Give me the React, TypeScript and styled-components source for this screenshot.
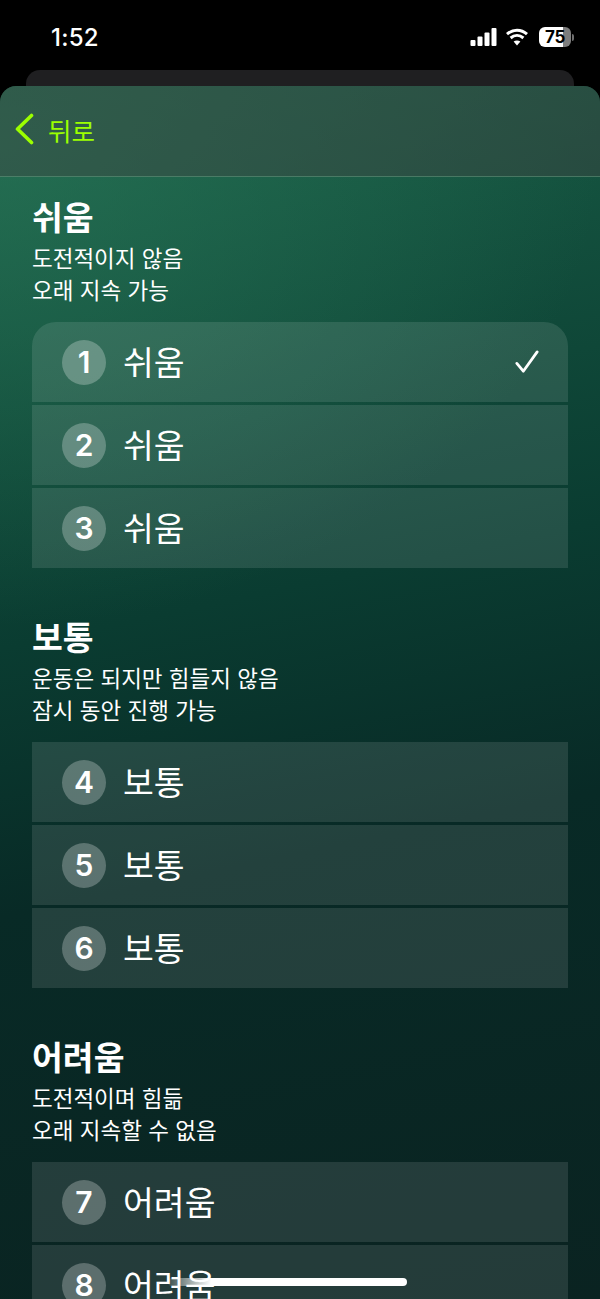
import React from 'react';
import styled, { createGlobalStyle } from 'styled-components';

const GlobalStyle = createGlobalStyle`
    html, body {
        margin: 0;
        padding: 0;
        background: #000000;
    }
    * {
        box-sizing: border-box;
    }
`;

const Screen = styled.div`
    position: relative;
    width: 600px;
    height: 1299px;
    overflow: hidden;
    background: #000000;
    color: #ffffff;
    font-family: "Inter", "Noto Sans CJK KR", sans-serif;
`;

const StatusBar = styled.div`
    display: flex;
    justify-content: space-between;
    align-items: center;
    height: 70px;
    padding: 4px 26px 0 51px;
`;

const Clock = styled.div`
    font-size: 24px;
    font-weight: 500;
    letter-spacing: 0.2px;
`;

const StatusIcons = styled.div`
    display: flex;
    align-items: center;
    gap: 9px;
`;

const Battery = styled.div`
    display: flex;
    align-items: center;
    justify-content: center;
    width: 32px;
    height: 20px;
    margin-left: 2px;
    border-radius: 6px;
    overflow: hidden;
    background: linear-gradient(90deg, #ffffff 0 24px, #7d7d7d 24px 100%);
    color: #000000;
    font-size: 17px;
    font-weight: 700;
    letter-spacing: -0.4px;
`;

const BatteryCap = styled.div`
    width: 2px;
    height: 7px;
    margin-left: -8px;
    border-radius: 0 2px 2px 0;
    background: #6f6f6f;
`;

const BackSheet = styled.div`
    height: 40px;
    margin: 0 26px -24px;
    border-radius: 14px 14px 0 0;
    background: #1f1f21;
`;

const Sheet = styled.div`
    position: relative;
    height: 1213px;
    border-radius: 16px 16px 0 0;
    overflow: hidden;
    background:
        radial-gradient(ellipse 600px 480px at 0px 60px, rgba(43, 122, 90, 0.6) 0%, rgba(43, 122, 90, 0) 100%),
        linear-gradient(168deg, #1a5f47 0%, #0a3c31 42%, #082a26 62%, #0a2321 100%);
`;

const Header = styled.div`
    display: flex;
    align-items: center;
    gap: 13px;
    height: 91px;
    padding: 0 0 4px 15px;
    background: rgba(66, 66, 66, 0.42);
    border-bottom: 1px solid rgba(110, 170, 140, 0.45);
`;

const BackLabel = styled.span`
    color: #9cff00;
    font-size: 25.5px;
    font-weight: 400;
`;

const Content = styled.div`
    display: flex;
    flex-direction: column;
    gap: 49px;
    padding: 20px 32px 0;
`;

const Section = styled.section`
    display: flex;
    flex-direction: column;
`;

const SectionTitle = styled.h2`
    margin: 0;
    height: 42px;
    font-size: 33.5px;
    line-height: 42px;
    font-weight: 700;
`;

const SectionDescription = styled.p`
    margin: 4px 0 15px;
    font-size: 22.5px;
    line-height: 32px;
    font-weight: 400;
    height: 64px;
`;

const Rows = styled.div<{ $rounded: boolean }>`
    display: flex;
    flex-direction: column;
    gap: 3px;
    border-radius: ${(props) => (props.$rounded ? '24px 24px 0 0' : '0')};
    overflow: hidden;
`;

const Row = styled.div`
    display: flex;
    align-items: center;
    height: 80px;
    padding: 0 28px 0 30px;
    background: rgba(255, 255, 255, 0.108);
`;

const Badge = styled.div`
    display: flex;
    align-items: center;
    justify-content: center;
    width: 44px;
    height: 45px;
    border-radius: 50%;
    background: rgba(255, 255, 255, 0.26);
    font-size: 30px;
    font-weight: 600;
`;

const RowLabel = styled.span`
    flex: 1;
    margin-left: 17px;
    font-size: 33.5px;
    line-height: 42px;
    margin-top: 2px;
    font-weight: 400;
`;

const HomeIndicator = styled.div`
    position: absolute;
    left: 168px;
    top: 1278px;
    width: 239px;
    height: 8px;
    border-radius: 4px;
    background: linear-gradient(90deg, rgba(255, 255, 255, 0.1) 0%, #ffffff 18%, #ffffff 100%);
`;

interface SectionData {
    title: string;
    lines: string[];
    rows: number[];
}

const sections: SectionData[] = [
    { title: '쉬움', lines: ['도전적이지 않음', '오래 지속 가능'], rows: [1, 2, 3] },
    { title: '보통', lines: ['운동은 되지만 힘들지 않음', '잠시 동안 진행 가능'], rows: [4, 5, 6] },
    { title: '어려움', lines: ['도전적이며 힘듦', '오래 지속할 수 없음'], rows: [7, 8, 9] },
];

export default function App() {
    return (
        <Screen>
            <GlobalStyle />
            <StatusBar>
                <Clock>1:52</Clock>
                <StatusIcons>
                    <svg width="27" height="18" viewBox="0 0 26 18" fill="#ffffff">
                        <rect x="0" y="12" width="5" height="6" rx="1" />
                        <rect x="7" y="8.5" width="5" height="9.5" rx="1" />
                        <rect x="14" y="4.5" width="5" height="13.5" rx="1" />
                        <rect x="21" y="0" width="5" height="18" rx="1" />
                    </svg>
                    <svg width="22" height="18" viewBox="0 0 22 18" fill="none" stroke="#ffffff" strokeWidth="3">
                        <path d="M1 6.2C6.8 1 15.2 1 21 6.2" />
                        <path d="M4.6 10C8.4 6.7 13.6 6.7 17.4 10" />
                        <path d="M11 17.5L7.6 13.6C9.6 12 12.4 12 14.4 13.6Z" fill="#ffffff" stroke="none" />
                    </svg>
                    <Battery>75</Battery>
                    <BatteryCap />
                </StatusIcons>
            </StatusBar>
            <BackSheet />
            <Sheet>
                <Header>
                    <svg width="20" height="32" viewBox="0 0 20 32" fill="none" stroke="#9cff00" strokeWidth="3.6" strokeLinecap="round" strokeLinejoin="round">
                        <path d="M16.5 2.5L2.5 16L16.5 29.5" />
                    </svg>
                    <BackLabel>뒤로</BackLabel>
                </Header>
                <Content>
                    {sections.map((section, index) => (
                        <Section key={section.title}>
                            <SectionTitle>{section.title}</SectionTitle>
                            <SectionDescription>
                                {section.lines[0]}
                                <br />
                                {section.lines[1]}
                            </SectionDescription>
                            <Rows $rounded={index === 0}>
                                {section.rows.map((num) => (
                                    <Row key={num}>
                                        <Badge>{num}</Badge>
                                        <RowLabel>{section.title}</RowLabel>
                                        {num === 1 ? (
                                            <svg width="26" height="24" viewBox="0 0 26 26" fill="none" stroke="#ffffff" strokeWidth="3" strokeLinecap="round" strokeLinejoin="round">
                                                <path d="M2 14.5L9 23L24 2" />
                                            </svg>
                                        ) : null}
                                    </Row>
                                ))}
                            </Rows>
                        </Section>
                    ))}
                </Content>
            </Sheet>
            <HomeIndicator />
        </Screen>
    );
}
